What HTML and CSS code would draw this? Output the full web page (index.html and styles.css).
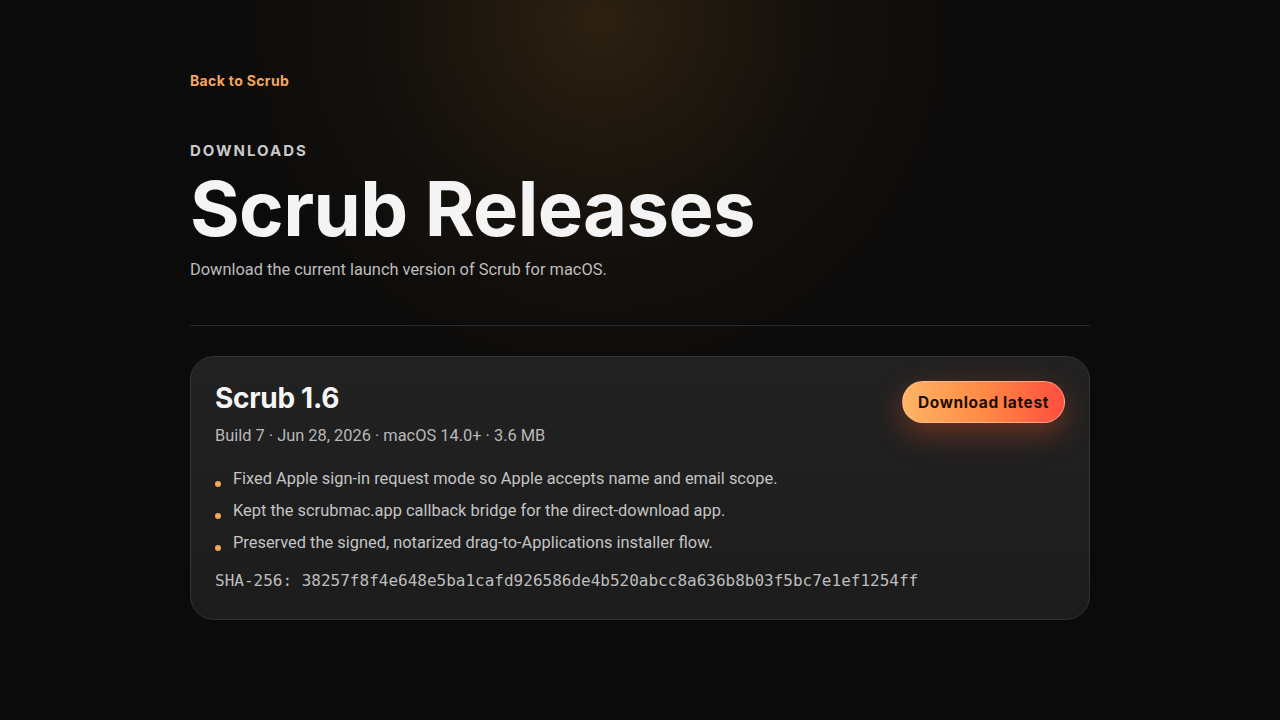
FILE: index.html
```html
<!DOCTYPE html>
<html lang="en">
<head>
<meta charset="utf-8">
<title>Scrub Releases</title>
<link rel="stylesheet" href="styles.css">
</head>
<body>
<div class="glow"></div>
<main class="page">
  <a class="back" href="#">Back to Scrub</a>
  <header class="hero">
    <p class="eyebrow">DOWNLOADS</p>
    <h1 class="title">Scrub Releases</h1>
    <p class="lede">Download the current launch version of Scrub for macOS.</p>
  </header>
  <hr class="divider">
  <section class="card">
    <div class="card-head">
      <div>
        <h2 class="version">Scrub 1.6</h2>
        <p class="meta">Build 7 · Jun 28, 2026 · macOS 14.0+ · 3.6 MB</p>
      </div>
      <a class="btn" href="#">Download latest</a>
    </div>
    <ul class="notes">
      <li>Fixed Apple sign-in request mode so Apple accepts name and email scope.</li>
      <li>Kept the scrubmac.app callback bridge for the direct-download app.</li>
      <li>Preserved the signed, notarized drag-to-Applications installer flow.</li>
    </ul>
    <p class="sha">SHA-256: 38257f8f4e648e5ba1cafd926586de4b520abcc8a636b8b03f5bc7e1ef1254ff</p>
  </section>
</main>
</body>
</html>
```

FILE: styles.css
```css
* { box-sizing: border-box; }
html, body { margin: 0; padding: 0; }
body {
  background: #0b0b0b;
  color: #f2f2f2;
  font-family: Roboto, Inter, "Noto Sans", sans-serif;
  min-height: 720px;
  overflow: hidden;
  position: relative;
}
.glow {
  position: absolute;
  left: 200px;
  top: -380px;
  width: 800px;
  height: 800px;
  border-radius: 50%;
  background: radial-gradient(circle at center, rgba(115, 78, 30, 0.32) 0%, rgba(70, 45, 20, 0.16) 38%, rgba(20, 15, 10, 0) 70%);
  pointer-events: none;
}
.page {
  position: relative;
  width: 900px;
  margin: 0 auto;
  padding-top: 71px;
}
.back {
  display: inline-block;
  color: #f5a65b;
  font-family: Inter, "Noto Sans", sans-serif;
  font-size: 14px;
  font-weight: 700;
  letter-spacing: 0.35px;
  text-decoration: none;
  line-height: 17px;
}
.hero { margin-top: 52px; }
.eyebrow {
  margin: 0;
  color: #c9c9c9;
  font-family: Inter, "Noto Sans", sans-serif;
  font-size: 15px;
  font-weight: 700;
  letter-spacing: 2px;
  line-height: 18px;
}
.title {
  margin: 6px 0 0;
  font-family: Inter, "Noto Sans", sans-serif;
  font-size: 76px;
  font-weight: 700;
  letter-spacing: -0.65px;
  line-height: 84px;
  color: #f4f4f4;
}
.lede {
  margin: 9px 0 0;
  color: #bdbdbd;
  font-size: 16.4px;
  line-height: 22px;
}
.divider {
  border: 0;
  border-top: 1px solid #2a2a2a;
  margin: 44px 0 0;
}
.card {
  margin-top: 30px;
  background: linear-gradient(180deg, #222222 0%, #1c1c1c 100%);
  border: 1px solid #333333;
  border-radius: 24px;
  padding: 23px 24px 28px;
}
.card-head {
  display: flex;
  justify-content: space-between;
  align-items: flex-start;
}
.version {
  margin: 0;
  font-family: Inter, "Noto Sans", sans-serif;
  font-size: 28px;
  font-weight: 700;
  line-height: 36px;
  letter-spacing: -0.3px;
  color: #f6f6f6;
}
.meta {
  margin: 9px 0 0;
  color: #b8b8b8;
  font-size: 16.4px;
  line-height: 22px;
}
.btn {
  margin-top: 1px;
  display: inline-flex;
  align-items: center;
  justify-content: center;
  height: 42px;
  padding: 0 15px;
  border-radius: 21px;
  background: linear-gradient(90deg, #ffb466 0%, #ff8a45 50%, #ff4e3e 100%);
  border: 1px solid rgba(255, 200, 170, 0.6);
  color: #1e0d05;
  font-family: Inter, "Noto Sans", sans-serif;
  font-size: 15.5px;
  font-weight: 700;
  letter-spacing: 0.6px;
  text-decoration: none;
  box-shadow: 0 10px 30px rgba(255, 90, 40, 0.35);
}
.notes {
  list-style: none;
  margin: 21px 0 0;
  padding: 0;
}
.notes li {
  position: relative;
  padding-left: 18px;
  color: #c4c4c4;
  font-size: 16.4px;
  line-height: 22px;
  margin-bottom: 10px;
}
.notes li::before {
  content: "";
  position: absolute;
  left: 0;
  top: 13px;
  width: 6px;
  height: 6px;
  border-radius: 50%;
  background: #f5a65b;
}
.sha {
  margin: 17px 0 0;
  font-family: "DejaVu Sans Mono", "Liberation Mono", monospace;
  font-size: 16px;
  line-height: 20px;
  color: #bdbdbd;
}
```
